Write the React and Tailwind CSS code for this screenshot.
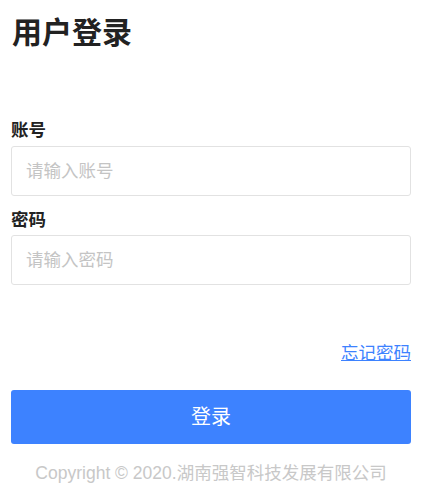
import React from 'react';

const App = () => {
  return (
    <div className="w-[426px] h-[494px] bg-white pl-[11px] pr-[15px] font-['Liberation_Sans','Noto_Sans_CJK_SC',sans-serif]">
      <h1 className="pt-[14px] pl-px text-[30px] leading-[38px] font-bold text-[#222]">用户登录</h1>

      <form className="mt-[66px] flex flex-col">
        <label className="text-[17.5px] leading-[24px] font-bold text-[#222]">账号</label>
        <input
          className="mt-[4px] h-[50px] w-[400px] rounded-[3px] border border-[#e2e2e2] px-[14px] text-[17.5px] outline-none placeholder:text-[#c4c4c4]"
          placeholder="请输入账号"
        />
        <label className="mt-[12px] text-[17.5px] leading-[24px] font-bold text-[#222]">密码</label>
        <input
          type="password"
          className="mt-[3px] h-[50px] w-[400px] rounded-[3px] border border-[#e2e2e2] px-[14px] text-[17.5px] outline-none placeholder:text-[#c4c4c4]"
          placeholder="请输入密码"
        />

        <div className="mt-[56px] flex justify-end">
          <a href="#" className="text-[17.5px] leading-[24px] text-[#3d82ff] underline">忘记密码</a>
        </div>

        <button
          type="button"
          className="mt-[25px] h-[54px] w-[400px] rounded-[3px] bg-[#3d82ff] text-[20px] text-white"
        >
          登录
        </button>
      </form>

      <p className="mt-[17px] text-center text-[17.5px] leading-[24px] text-[#c8c8c8]">
        Copyright © 2020.湖南强智科技发展有限公司
      </p>
    </div>
  );
};

export default App;
